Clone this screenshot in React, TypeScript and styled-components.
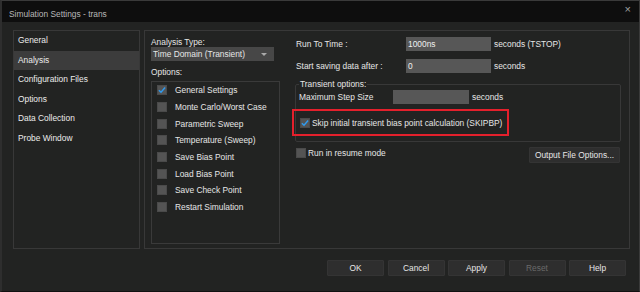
import styled, { createGlobalStyle } from "styled-components";

const GlobalStyle = createGlobalStyle`
  body {
    margin: 0;
    background: #222322;
    font-family: "Liberation Sans", Arial, sans-serif;
    font-size: 8.4px;
    color: #e6e6e6;
    white-space: nowrap;
  }
`;

const Window = styled.div`
  width: 640px;
  height: 292px;
  box-sizing: border-box;
  display: flex;
  flex-direction: column;
  background: #222322;
  border: 1px solid #3a3a3a;
  border-left: 2px solid #2e2e2e;
  border-bottom: 1px solid #111;
`;

const TitleBar = styled.div`
  height: 21px;
  flex: none;
  display: flex;
  align-items: center;
  justify-content: space-between;
  padding: 0 8px 0 7px;
  background: #0e0e0e;
  color: #b8b8b8;
  & > span:first-child {
    margin-top: 5px;
  }
`;

const CloseButton = styled.span`
  font-size: 11px;
  color: #a0a0a0;
  margin-top: -6px;
`;

const Content = styled.div`
  display: flex;
  gap: 4px;
  padding: 8px 0 0 11px;
  height: 219px;
  flex: none;
`;

const Panel = styled.div<{ $width: number }>`
  width: ${(p) => p.$width}px;
  box-sizing: border-box;
  border: 1px solid #383838;
`;

const NavItem = styled.div<{ $active?: boolean }>`
  height: 19.5px;
  line-height: 19.5px;
  padding-left: 4px;
  background: ${(p) => (p.$active ? "#3c3c3c" : "transparent")};
  color: #ececec;
`;

const MainPanel = styled(Panel)`
  display: flex;
  padding: 6px 0 0 6px;
`;

const LeftCol = styled.div`
  width: 129px;
  flex: none;
  display: flex;
  flex-direction: column;
`;

const Label = styled.div`
  line-height: 11px;
`;

const Dropdown = styled.div`
  height: 14px;
  width: 123px;
  margin-top: -1px;
  box-sizing: border-box;
  background: #474747;
  padding-left: 2px;
  display: flex;
  align-items: center;
  justify-content: space-between;
  margin-bottom: 6px;
`;

const Arrow = styled.span`
  width: 0;
  height: 0;
  border-left: 3px solid transparent;
  border-right: 3px solid transparent;
  border-top: 3px solid #aaa;
  margin-right: 7px;
`;

const OptionsBox = styled.div`
  margin-top: 3px;
  height: 163px;
  box-sizing: border-box;
  border: 1px solid #3a3a3a;
  padding: 0 0 0 5px;
`;

const CheckRow = styled.div<{ $gap?: number; $h?: number }>`
  display: flex;
  align-items: center;
  height: ${(p) => p.$h ?? 16.7}px;
  gap: ${(p) => p.$gap ?? 8}px;
`;

const Box = styled.span`
  width: 10px;
  height: 10px;
  flex: none;
  background: #545454;
  border: 1px solid #4a4a4a;
  box-sizing: border-box;
  display: flex;
  align-items: center;
  justify-content: center;
`;

const RightCol = styled.div`
  flex: 1;
  padding-left: 16px;
  padding-right: 8px;
  display: flex;
  flex-direction: column;
`;

const FieldRow = styled.div<{ $label: number }>`
  display: flex;
  align-items: center;
  height: 14px;
  margin-bottom: 8px;
  & > span:first-child {
    width: ${(p) => p.$label}px;
    flex: none;
  }
`;

const Input = styled.div<{ $width: number }>`
  width: ${(p) => p.$width}px;
  height: 14px;
  background: #575757;
  box-sizing: border-box;
  padding-left: 2px;
  line-height: 14px;
  margin-right: 3px;
  color: #f0f0f0;
`;

const Group = styled.fieldset`
  margin: -2px 0 0 -1px;
  padding: 0 3px 4px 3px;
  border: 1px solid #383838;
  border-radius: 2px;
  height: 63px;
  box-sizing: border-box;
  min-width: 0;
  & > legend {
    padding: 0 1px;
    margin-left: 0;
    line-height: 10px;
  }
`;

const Highlight = styled.div`
  margin: 5px 0 0 -7px;
  width: 217px;
  height: 27px;
  box-sizing: border-box;
  border: 2px solid #e4202c;
  display: flex;
  align-items: center;
  padding-left: 6px;
  gap: 2px;
`;

const BottomRow = styled.div`
  display: flex;
  justify-content: space-between;
  align-items: flex-start;
  margin-top: 5px;
  margin-right: 1px;
`;

const Button = styled.div<{ $width: number; $disabled?: boolean }>`
  width: ${(p) => p.$width}px;
  height: 16px;
  box-sizing: border-box;
  background: #2e2e2e;
  border: 1px solid #343434;
  border-radius: 1px;
  display: flex;
  align-items: center;
  justify-content: center;
  color: ${(p) => (p.$disabled ? "#6a6a6a" : "#e6e6e6")};
`;

const Footer = styled.div`
  display: flex;
  justify-content: flex-end;
  gap: 3.5px;
  padding: 11px 13px 0 0;
`;

const Check = () => (
  <svg width="9" height="8" viewBox="0 0 9 8">
    <path d="M1 4.2 L3.4 6.6 L8 1.2" stroke="#2f9bf0" strokeWidth="1.6" fill="none" />
  </svg>
);

const options = [
  "General Settings",
  "Monte Carlo/Worst Case",
  "Parametric Sweep",
  "Temperature (Sweep)",
  "Save Bias Point",
  "Load Bias Point",
  "Save Check Point",
  "Restart Simulation",
];

const nav = ["General", "Analysis", "Configuration Files", "Options", "Data Collection", "Probe Window"];

export default function App() {
  return (
    <>
      <GlobalStyle />
      <Window>
        <TitleBar>
          <span>Simulation Settings - trans</span>
          <CloseButton>×</CloseButton>
        </TitleBar>
        <Content>
          <Panel $width={127}>
            {nav.map((n) => (
              <NavItem key={n} $active={n === "Analysis"}>
                {n}
              </NavItem>
            ))}
          </Panel>
          <MainPanel $width={486}>
            <LeftCol>
              <Label>Analysis Type:</Label>
              <Dropdown>
                <span>Time Domain (Transient)</span>
                <Arrow />
              </Dropdown>
              <Label>Options:</Label>
              <OptionsBox>
                {options.map((o, i) => (
                  <CheckRow key={o}>
                    <Box>{i === 0 && <Check />}</Box>
                    <span>{o}</span>
                  </CheckRow>
                ))}
              </OptionsBox>
            </LeftCol>
            <RightCol>
              <FieldRow $label={110}>
                <span>Run To Time :</span>
                <Input $width={85}>1000ns</Input>
                <span>seconds (TSTOP)</span>
              </FieldRow>
              <FieldRow $label={110}>
                <span>Start saving data after :</span>
                <Input $width={85}>0</Input>
                <span>seconds</span>
              </FieldRow>
              <Group>
                <legend>Transient options:</legend>
                <FieldRow $label={94} style={{ marginBottom: 0, marginTop: 1 }}>
                  <span>Maximum Step Size</span>
                  <Input $width={76} />
                  <span>seconds</span>
                </FieldRow>
                <Highlight>
                  <Box>
                    <Check />
                  </Box>
                  <span>Skip initial transient bias point calculation (SKIPBP)</span>
                </Highlight>
              </Group>
              <BottomRow>
                <CheckRow $gap={2} $h={11}>
                  <Box />
                  <span>Run in resume mode</span>
                </CheckRow>
                <Button $width={91}>Output File Options...</Button>
              </BottomRow>
            </RightCol>
          </MainPanel>
        </Content>
        <Footer>
          <Button $width={57}>OK</Button>
          <Button $width={57}>Cancel</Button>
          <Button $width={57}>Apply</Button>
          <Button $width={57} $disabled>
            Reset
          </Button>
          <Button $width={57}>Help</Button>
        </Footer>
      </Window>
    </>
  );
}
